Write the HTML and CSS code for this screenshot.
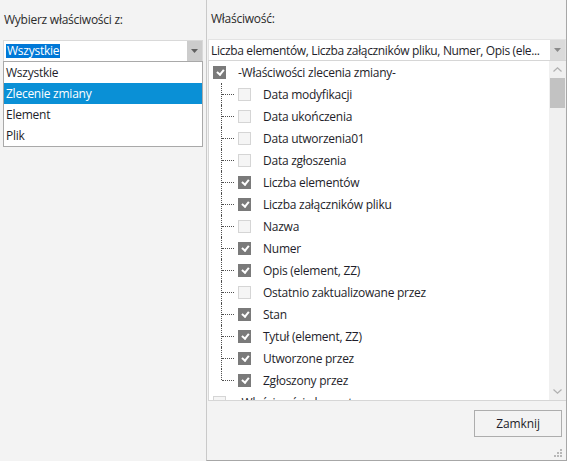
FILE: index.html
```html
<!DOCTYPE html>
<html>
<head>
<meta charset="utf-8">
<link rel="stylesheet" href="styles.css">
</head>
<body>
<div class="left">
  <div class="label">Wybierz właściwości z:</div>
  <div class="combo combo-left">
    <span class="combo-text"><span class="sel">Wszystkie</span></span>
    <span class="combo-btn"><svg width="7" height="4" viewBox="0 0 7 4"><path d="M0 0H7L3.5 4Z" fill="#606060"/></svg></span>
  </div>
  <div class="dropdown">
    <div class="opt">Wszystkie</div>
    <div class="opt active">Zlecenie zmiany</div>
    <div class="opt">Element</div>
    <div class="opt">Plik</div>
  </div>
</div>
<div class="right">
  <div class="label label-right">Właściwość:</div>
  <div class="combo combo-right">
    <span class="combo-text">Liczba elementów, Liczba załączników pliku, Numer, Opis (ele...</span>
    <span class="combo-btn"><svg width="7" height="4" viewBox="0 0 7 4"><path d="M0 0H7L3.5 4Z" fill="#8a8a8a"/></svg></span>
  </div>
  <div class="listbox">
    <div class="rows">
      <div class="row top"><span class="cb on"></span><span class="txt">-Właściwości zlecenia zmiany-</span></div>
      <div class="row child"><span class="tree"></span><span class="cb"></span><span class="txt">Data modyfikacji</span></div>
      <div class="row child"><span class="tree"></span><span class="cb"></span><span class="txt">Data ukończenia</span></div>
      <div class="row child"><span class="tree"></span><span class="cb"></span><span class="txt">Data utworzenia01</span></div>
      <div class="row child"><span class="tree"></span><span class="cb"></span><span class="txt">Data zgłoszenia</span></div>
      <div class="row child"><span class="tree"></span><span class="cb on"></span><span class="txt">Liczba elementów</span></div>
      <div class="row child"><span class="tree"></span><span class="cb on"></span><span class="txt">Liczba załączników pliku</span></div>
      <div class="row child"><span class="tree"></span><span class="cb"></span><span class="txt">Nazwa</span></div>
      <div class="row child"><span class="tree"></span><span class="cb on"></span><span class="txt">Numer</span></div>
      <div class="row child"><span class="tree"></span><span class="cb on"></span><span class="txt">Opis (element, ZZ)</span></div>
      <div class="row child"><span class="tree"></span><span class="cb"></span><span class="txt">Ostatnio zaktualizowane przez</span></div>
      <div class="row child"><span class="tree"></span><span class="cb on"></span><span class="txt">Stan</span></div>
      <div class="row child"><span class="tree"></span><span class="cb on"></span><span class="txt">Tytuł (element, ZZ)</span></div>
      <div class="row child"><span class="tree"></span><span class="cb on"></span><span class="txt">Utworzone przez</span></div>
      <div class="row child last"><span class="tree"></span><span class="cb on"></span><span class="txt">Zgłoszony przez</span></div>
      <div class="row top"><span class="cb"></span><span class="txt">-Właściwości elementu-</span></div>
    </div>
    <div class="scrollbar">
      <span class="arrow"><svg width="9" height="5" viewBox="0 0 9 5"><path d="M0.5 4.5L4.5 0.8L8.5 4.5" fill="none" stroke="#b0b0b0" stroke-width="1.2"/></svg></span>
      <span class="thumb"></span>
      <span class="track"></span>
      <span class="arrow"><svg width="9" height="5" viewBox="0 0 9 5"><path d="M0.5 0.5L4.5 4.2L8.5 0.5" fill="none" stroke="#b0b0b0" stroke-width="1.2"/></svg></span>
    </div>
  </div>
  <div class="footer">
    <button class="btn">Zamknij</button>
    <span class="grip"><svg width="9" height="9" viewBox="0 0 9 9" fill="#b8b8b8"><rect x="6" y="0" width="2" height="2"/><rect x="3" y="3" width="2" height="2"/><rect x="6" y="3" width="2" height="2"/><rect x="0" y="6" width="2" height="2"/><rect x="3" y="6" width="2" height="2"/><rect x="6" y="6" width="2" height="2"/></svg></span>
  </div>
</div>
</body>
</html>
```

FILE: styles.css
```css
html, body {
  margin: 0;
  padding: 0;
}
body {
  width: 567px;
  height: 461px;
  overflow: hidden;
  background: #f3f3f3;
  font-family: "Open Sans", "Noto Sans", sans-serif;
  font-size: 12px;
  letter-spacing: -0.25px;
  color: #1e1e2a;
  display: flex;
  align-items: flex-start;
}
.left {
  width: 203px;
  flex: none;
}
.label {
  height: 40px;
  box-sizing: border-box;
  padding: 12px 0 0 4px;
  line-height: 16px;
  color: #2a2a2a;
}
.combo {
  display: flex;
  background: #fff;
  box-sizing: border-box;
  height: 21px;
}
.combo-left {
  margin-left: 3px;
  width: 200px;
  border: 1px solid #d9d9d9;
  border-bottom: none;
}
.combo-text {
  flex: 1;
  display: flex;
  align-items: center;
  padding-left: 2px;
  white-space: nowrap;
  overflow: hidden;
}
.sel {
  background: #0078d7;
  color: #fff;
  line-height: 14px;
  padding: 0 1px;
}
.combo-btn {
  width: 15px;
  flex: none;
  background: #cccccc;
  display: flex;
  align-items: center;
  justify-content: center;
}
.combo-right .combo-btn {
  background: #dadada;
  width: 15px;
}
.dropdown {
  margin-left: 3px;
  width: 200px;
  box-sizing: border-box;
  border: 1px solid #a9a9a9;
  background: #fff;
}
.opt {
  height: 21px;
  line-height: 21px;
  padding-left: 2px;
}
.opt.active {
  background: #0a90d6;
  color: #fff;
}
.right {
  margin-left: 3px;
  width: 361px;
  height: 461px;
  box-sizing: border-box;
  border-left: 1px solid #c9c9c9;
  border-right: 1px solid #a7a7a7;
  border-bottom: 1px solid #a7a7a7;
  padding-left: 1px;
  display: flex;
  flex-direction: column;
}
.label-right {
  height: 39px;
  padding: 11px 0 0 3px;
}
.combo-right {
  width: 358px;
  border: 1px solid #e3e3e3;
  border-bottom: none;
  height: 21px;
}
.combo-right .combo-text {
  padding-left: 2px;
  letter-spacing: -0.35px;
}
.listbox {
  height: 341px;
  flex: none;
  box-sizing: border-box;
  border-top: 1px solid #d6d6d6;
  border-left: 1px solid #d6d6d6;
  border-bottom: 1px solid #d6d6d6;
  background: #fff;
  display: flex;
  overflow: hidden;
}
.rows {
  flex: 1;
  overflow: hidden;
}
.row {
  height: 22px;
  display: flex;
  align-items: center;
  white-space: nowrap;
}
.row.top {
  padding-left: 4px;
}
.row.child {
  padding-left: 12px;
}
.cb {
  width: 13px;
  height: 13px;
  flex: none;
  box-sizing: border-box;
  border: 1px solid #d5d5d5;
  background: #f5f5f5;
  position: relative;
}
.cb.on {
  background: #7a7a7a;
  border-color: #7a7a7a;
}
.cb.on::after {
  content: "";
  position: absolute;
  left: 3.5px;
  top: 1.5px;
  width: 2.5px;
  height: 5px;
  border-right: 2px solid #fff;
  border-bottom: 2px solid #fff;
  transform: rotate(40deg);
}
.txt {
  margin-left: 12px;
}
.row.child .txt {
  margin-left: 12px;
}
.tree {
  width: 17px;
  height: 22px;
  flex: none;
  position: relative;
}
.tree::before {
  content: "";
  position: absolute;
  left: 0;
  top: 0;
  height: 22px;
  border-left: 1px dotted #505050;
}
.row.last .tree::before {
  height: 11px;
}
.tree::after {
  content: "";
  position: absolute;
  left: 1px;
  top: 11px;
  width: 12px;
  border-top: 1px dotted #505050;
}
.scrollbar {
  width: 17px;
  flex: none;
  background: #f0f0f0;
  display: flex;
  flex-direction: column;
  align-items: center;
}
.arrow {
  height: 17px;
  display: flex;
  align-items: center;
  justify-content: center;
  flex: none;
}
.thumb {
  width: 15px;
  height: 30px;
  background: #c2c2c2;
  flex: none;
}
.track {
  flex: 1;
}
.footer {
  flex: 1;
  display: flex;
  justify-content: flex-end;
  align-items: flex-start;
  position: relative;
}
.btn {
  margin-top: 9px;
  margin-right: 4px;
  width: 88px;
  height: 27px;
  background: #f3f3f3;
  border: 1px solid #adadad;
  font-family: "Open Sans", "Noto Sans", sans-serif;
  font-size: 12px;
  letter-spacing: -0.1px;
  color: #1e1e2a;
  padding: 0;
}
.grip {
  position: absolute;
  right: 3px;
  bottom: 2px;
  width: 9px;
  height: 9px;
  display: flex;
}
```
